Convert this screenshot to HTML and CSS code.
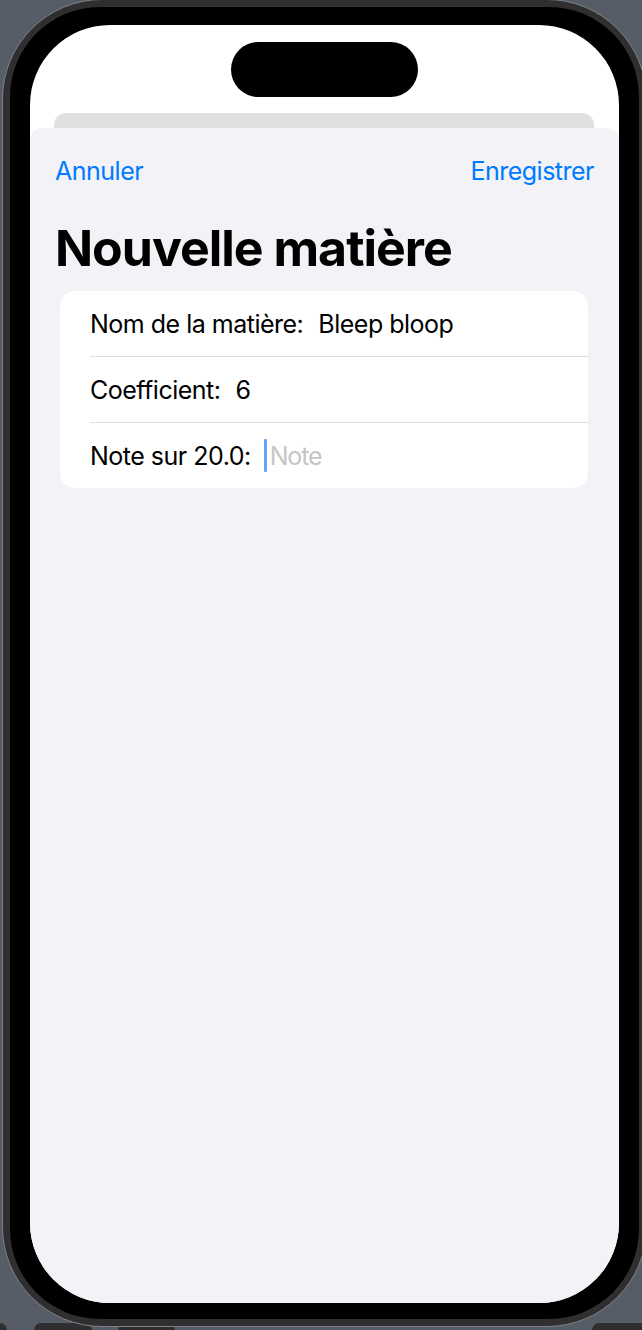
FILE: index.html
```html
<!DOCTYPE html>
<html lang="fr">
<head>
<meta charset="utf-8">
<title>Nouvelle matière</title>
<link rel="stylesheet" href="styles.css">
</head>
<body>
<div class="phone">
  <div class="bezel">
    <div class="screen">
      <div class="island"></div>
      <div class="peek"></div>
      <div class="sheet">
        <div class="nav">
          <span class="nav-btn">Annuler</span>
          <span class="nav-btn">Enregistrer</span>
        </div>
        <h1 class="title">Nouvelle matière</h1>
        <div class="card">
          <div class="row"><span class="label">Nom de la matière:</span><span class="value">Bleep bloop</span></div>
          <div class="row"><span class="label">Coefficient:</span><span class="value">6</span></div>
          <div class="row"><span class="label">Note sur 20.0:</span><span class="input"><span class="cursor"></span><span class="placeholder">Note</span></span></div>
        </div>
      </div>
    </div>
  </div>
</div>
<div class="tabs">
  <span class="tab tab-a"></span>
  <span class="tab tab-b"></span>
  <span class="tab tab-c"></span>
  <span class="tab tab-d"></span>
</div>
</body>
</html>
```

FILE: styles.css
```css
html, body {
  margin: 0;
  padding: 0;
  background: #565d66;
}
body {
  width: 642px;
  height: 1330px;
  overflow: hidden;
  font-family: Inter, "Noto Sans", "Liberation Sans", sans-serif;
}
.phone {
  position: relative;
  z-index: 1;
  width: 629px;
  margin: -1px 0 0 2px;
  padding: 7px;
  border: 1px solid #7e8288;
  border-radius: 100px;
  background: #2f2f30;
}
.bezel {
  padding: 18px 20px 16px 20px;
  border-radius: 90px;
  background: #000;
}
.screen {
  width: 589px;
  height: 1278px;
  border-radius: 80px;
  overflow: hidden;
  background: #fff;
  display: flex;
  flex-direction: column;
  align-items: center;
}
.island {
  width: 187px;
  height: 55px;
  margin-top: 17px;
  border-radius: 28px;
  background: #000;
  flex: none;
}
.peek {
  width: 540px;
  height: 15px;
  margin-top: 16px;
  margin-left: -1px;
  border-radius: 12px 12px 0 0;
  background: #e0e0e0;
  flex: none;
}
.sheet {
  align-self: stretch;
  flex: 1;
  background: #f2f2f7;
  border-radius: 12px 12px 0 0;
  padding: 28px 25px 0 25px;
}
.nav {
  display: flex;
  justify-content: space-between;
  height: 30px;
  line-height: 30px;
}
.nav-btn {
  font-size: 25px;
  letter-spacing: -0.5px;
  color: #007aff;
}
.title {
  margin: 32px 0 0 0;
  font-size: 50px;
  line-height: 60px;
  font-weight: 700;
  color: #000;
  letter-spacing: -1px;
}
.card {
  margin: 13px 6px 0 5px;
  background: #fff;
  border-radius: 15px;
  padding-left: 30px;
}
.row {
  display: flex;
  align-items: center;
  gap: 15px;
  height: 65px;
  font-size: 25px;
  letter-spacing: -0.5px;
  color: #000;
}
.row + .row {
  border-top: 1px solid #dedee1;
}
.input {
  display: flex;
  align-items: center;
  gap: 3px;
  margin-left: -2px;
}
.cursor {
  width: 3px;
  height: 33px;
  border-radius: 1px;
  background: #62a5f8;
}
.placeholder {
  color: #c5c5c7;
  letter-spacing: -1.2px;
}
.tabs {
  display: flex;
  margin-top: -5px;
}
.tab {
  height: 12px;
  background: #2f2f31;
  border: 1px solid #5c6066;
  border-bottom: none;
  border-radius: 8px 8px 0 0;
  flex: none;
}
.tab-a {
  width: 20px;
  margin-left: -14px;
}
.tab-b {
  width: 58px;
  margin-left: 25px;
}
.tab-c {
  width: 57px;
  margin-left: 24px;
}
.tab-d {
  width: 60px;
  margin-left: 415px;
}
```
